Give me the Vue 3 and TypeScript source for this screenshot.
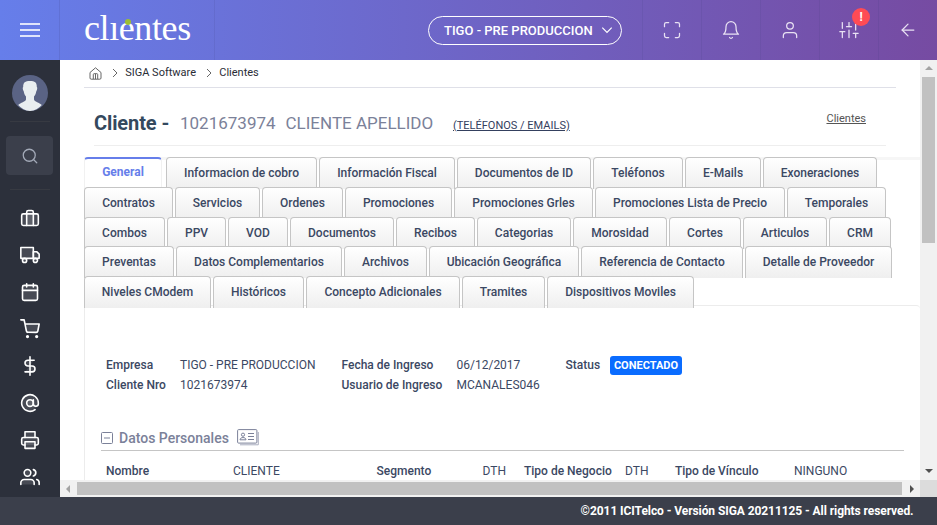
<script setup lang="ts">
interface Tab {
  label: string
  width: number
}

const headerIcons: { name: string; paths: string[]; alert?: boolean }[] = [
  { name: 'fullscreen', paths: ['M8 3H5a2 2 0 0 0-2 2v3', 'M21 8V5a2 2 0 0 0-2-2h-3', 'M16 21h3a2 2 0 0 0 2-2v-3', 'M3 16v3a2 2 0 0 0 2 2h3'] },
  { name: 'bell', paths: ['M18 8A6 6 0 0 0 6 8c0 7-3 9-3 9h18s-3-2-3-9', 'M13.73 21a2 2 0 0 1-3.46 0'] },
  { name: 'user', paths: ['M20 21v-2a4 4 0 0 0-4-4H8a4 4 0 0 0-4 4v2', 'M16 7a4 4 0 1 1-8 0a4 4 0 0 1 8 0z'] },
  { name: 'sliders', alert: true, paths: ['M4 21v-7', 'M4 10V3', 'M12 21v-9', 'M12 8V3', 'M20 21v-5', 'M20 12V3', 'M1 14h6', 'M9 8h6', 'M17 16h6'] },
  { name: 'back', paths: ['M19 12H5', 'M12 19l-7-7l7-7'] },
]

const sideIcons: { name: string; paths: string[] }[] = [
  { name: 'briefcase', paths: ['M4 7h16a2 2 0 0 1 2 2v10a2 2 0 0 1-2 2H4a2 2 0 0 1-2-2V9a2 2 0 0 1 2-2z', 'M16 21V5a2 2 0 0 0-2-2h-4a2 2 0 0 0-2 2v16'] },
  { name: 'truck', paths: ['M1 3h15v13H1z', 'M16 8h4l3 3v5h-7z', 'M8 18.5a2.5 2.5 0 1 1-5 0a2.5 2.5 0 0 1 5 0z', 'M21 18.5a2.5 2.5 0 1 1-5 0a2.5 2.5 0 0 1 5 0z'] },
  { name: 'calendar', paths: ['M5 4h14a2 2 0 0 1 2 2v14a2 2 0 0 1-2 2H5a2 2 0 0 1-2-2V6a2 2 0 0 1 2-2z', 'M16 2v4', 'M8 2v4', 'M3 10h18'] },
  { name: 'cart', paths: ['M10 21a1 1 0 1 1-2 0a1 1 0 0 1 2 0z', 'M21 21a1 1 0 1 1-2 0a1 1 0 0 1 2 0z', 'M1 1h4l2.68 13.39a2 2 0 0 0 2 1.61h9.72a2 2 0 0 0 2-1.61L23 6H6'] },
  { name: 'dollar', paths: ['M12 1v22', 'M17 5H9.5a3.5 3.5 0 0 0 0 7h5a3.5 3.5 0 0 1 0 7H6'] },
  { name: 'at', paths: ['M16 12a4 4 0 1 1-8 0a4 4 0 0 1 8 0z', 'M16 8v5a3 3 0 0 0 6 0v-1a10 10 0 1 0-3.92 7.94'] },
  { name: 'printer', paths: ['M6 9V2h12v7', 'M6 18H4a2 2 0 0 1-2-2v-5a2 2 0 0 1 2-2h16a2 2 0 0 1 2 2v5a2 2 0 0 1-2 2h-2', 'M6 14h12v8H6z'] },
  { name: 'users', paths: ['M17 21v-2a4 4 0 0 0-4-4H5a4 4 0 0 0-4 4v2', 'M13 7a4 4 0 1 1-8 0a4 4 0 0 1 8 0z', 'M23 21v-2a4 4 0 0 0-3-3.87', 'M16 3.13a4 4 0 0 1 0 7.75'] },
]

const tabRows: Tab[][] = [
  [
    { label: 'General', width: 78 },
    { label: 'Informacion de cobro', width: 151 },
    { label: 'Información Fiscal', width: 136 },
    { label: 'Documentos de ID', width: 134 },
    { label: 'Teléfonos', width: 90 },
    { label: 'E-Mails', width: 76 },
    { label: 'Exoneraciones', width: 114 },
  ],
  [
    { label: 'Contratos', width: 89 },
    { label: 'Servicios', width: 85 },
    { label: 'Ordenes', width: 81 },
    { label: 'Promociones', width: 107 },
    { label: 'Promociones Grles', width: 139 },
    { label: 'Promociones Lista de Precio', width: 190 },
    { label: 'Temporales', width: 99 },
  ],
  [
    { label: 'Combos', width: 81 },
    { label: 'PPV', width: 59 },
    { label: 'VOD', width: 60 },
    { label: 'Documentos', width: 104 },
    { label: 'Recibos', width: 79 },
    { label: 'Categorias', width: 94 },
    { label: 'Morosidad', width: 94 },
    { label: 'Cortes', width: 72 },
    { label: 'Articulos', width: 84 },
    { label: 'CRM', width: 62 },
  ],
  [
    { label: 'Preventas', width: 90 },
    { label: 'Datos Complementarios', width: 166 },
    { label: 'Archivos', width: 83 },
    { label: 'Ubicación Geográfica', width: 150 },
    { label: 'Referencia de Contacto', width: 162 },
    { label: 'Detalle de Proveedor', width: 147 },
  ],
  [
    { label: 'Niveles CModem', width: 127 },
    { label: 'Históricos', width: 91 },
    { label: 'Concepto Adicionales', width: 154 },
    { label: 'Tramites', width: 83 },
    { label: 'Dispositivos Moviles', width: 147 },
  ],
]
</script>

<template>
  <div class="app">
    <header class="topbar">
      <button class="menu" aria-label="Menu"><i></i><i></i><i></i></button>
      <div class="brand"><span class="logo">clıentes<b class="dot"></b></span></div>
      <div class="company">
        <button class="pill">
          <span>TIGO - PRE PRODUCCION</span>
          <svg width="12" height="12" viewBox="0 0 12 12"><path d="M1.3 3.6L6 8.4l4.7-4.8" /></svg>
        </button>
      </div>
      <div v-for="icon in headerIcons" :key="icon.name" class="tool">
        <svg class="line-icon" viewBox="0 0 24 24"><path v-for="d in icon.paths" :key="d" :d="d" /></svg>
        <span v-if="icon.alert" class="alert">!</span>
      </div>
    </header>

    <div class="middle">
      <aside class="sidebar">
        <svg class="avatar" viewBox="0 0 36 36">
          <circle cx="18" cy="18" r="18" fill="#5a6384" />
          <path fill="#e9eef0" d="M18 6c4.700 0 7 1.500 6.800 6 .7.300.6 3-.5 4.200-.5 3-1.500 4.300-2.300 5.300v3c.3 2 5.500 3.300 7.800 5.400A18 18 0 0 1 18 36 18 18 0 0 1 6.200 29.900c2.300-2.100 7.500-3.400 7.800-5.400v-3c-.8-1-1.800-2.300-2.300-5.300-1.100-1.200-1.200-3.900-.5-4.200C11 7.500 13.300 6 18 6z" />
        </svg>
        <hr />
        <div class="search">
          <svg viewBox="0 0 24 24"><circle cx="11" cy="11" r="8" /><path d="M21 21l-4.350-4.350" /></svg>
        </div>
        <hr />
        <nav>
          <svg v-for="icon in sideIcons" :key="icon.name" viewBox="0 0 24 24">
            <path v-for="d in icon.paths" :key="d" :d="d" />
          </svg>
        </nav>
      </aside>

      <main class="content">
        <div class="viewport">
          <div class="crumbs">
            <svg class="home" width="13" height="13" viewBox="0 0 13 13"><path d="M1 5.500L6.500.8 12 5.500v5.500a1.200 1.200 0 0 1-1.200 1.200H2.200A1.200 1.200 0 0 1 1 11zM4.300 12V7.500a.8.800 0 0 1 .8-.8h2.800a.8.800 0 0 1 .8.800V12M6.500 7v5" /></svg>
            <svg class="sep" width="6" height="10" viewBox="0 0 6 10"><path d="M1 1l4 4-4 4" /></svg>
            <span>SIGA Software</span>
            <svg class="sep" width="6" height="10" viewBox="0 0 6 10"><path d="M1 1l4 4-4 4" /></svg>
            <span>Clientes</span>
          </div>

          <div class="title">
            <h1>Cliente -</h1>
            <span class="id">1021673974</span>
            <span class="name">CLIENTE APELLIDO</span>
            <a class="contact">(TELÉFONOS / EMAILS)</a>
            <a class="back">Clientes</a>
          </div>

          <div class="tabs">
            <div v-for="(row, r) in tabRows" :key="r" class="tab-row">
              <a
                v-for="tab in row"
                :key="tab.label"
                class="tab"
                :class="{ active: tab.label === 'General' }"
                :style="{ width: tab.width + 'px' }"
              >{{ tab.label }}</a>
            </div>
          </div>

          <section class="panel">
            <div class="summary">
              <b>Empresa</b><span>TIGO - PRE PRODUCCION</span>
              <b>Fecha de Ingreso</b><span>06/12/2017</span>
              <b>Status</b><em class="badge">CONECTADO</em>
              <b>Cliente Nro</b><span>1021673974</span>
              <b>Usuario de Ingreso</b><span>MCANALES046</span>
            </div>

            <h2>
              <svg width="12" height="12" viewBox="0 0 12 12"><rect x=".5" y=".5" width="11" height="11" rx="1" /><path d="M3 6h6" /></svg>
              <span>Datos Personales</span>
              <svg class="card" width="22" height="17" viewBox="0 0 22 17">
                <path class="shade" d="M3 15.800h18.300V3" />
                <rect x=".6" y=".6" width="19.300" height="13.500" rx="1" />
                <circle cx="6" cy="5.700" r="1.600" />
                <path d="M3 10.800c0-3 6-3 6 0zM11 4.500h6M11 7.500h6M11 10.500h6" />
              </svg>
            </h2>

            <div class="personal">
              <b>Nombre</b><span>CLIENTE</span>
              <b>Segmento</b><span>DTH</span>
              <b>Tipo de Negocio</b><span>DTH</span>
              <b>Tipo de Vínculo</b><span>NINGUNO</span>
            </div>
          </section>
        </div>
        <div class="vbar"><i class="up"></i><i class="vthumb"></i><i class="down"></i></div>
        <div class="hbar"><i class="left"></i><i class="hthumb"></i><i class="right"></i></div>
        <div class="corner"></div>
      </main>
    </div>

    <footer class="footer">©2011 ICITelco - Versión SIGA 20211125 - All rights reserved.</footer>
  </div>
</template>

<style>
body {
  margin: 0;
  overflow: hidden;
}
</style>

<style scoped>
* {
  box-sizing: border-box;
}
.app {
  width: 937px;
  height: 525px;
  display: flex;
  flex-direction: column;
  font-family: Roboto, sans-serif;
  font-size: 12px;
  color: #3b4863;
  overflow: hidden;
  white-space: nowrap;
}
button {
  font: inherit;
  color: inherit;
  background: none;
  border: 0;
  padding: 0;
}
svg {
  flex: none;
}
.topbar {
  height: 60px;
  flex: none;
  display: flex;
  color: #fff;
  background: linear-gradient(90deg, #667eea 0%, #764ba2 100%);
}
.menu {
  flex: none;
  width: 60px;
  border-right: 1px solid rgba(60, 60, 120, 0.15);
  display: flex;
  flex-direction: column;
  align-items: center;
  justify-content: center;
  gap: 4px;
}
.menu i {
  width: 20px;
  height: 2px;
  background: #dfe4fb;
}
.brand {
  flex: none;
  width: 155px;
  border-right: 1px solid rgba(60, 60, 120, 0.12);
  padding: 8px 0 0 24px;
}
.logo {
  position: relative;
  display: block;
  font-family: 'Liberation Serif', serif;
  font-size: 36px;
  line-height: 40px;
  letter-spacing: -0.4px;
}
.dot {
  position: absolute;
  left: 41px;
  top: 11px;
  width: 6px;
  height: 6px;
  border-radius: 50%;
  background: #9dbe32;
}
.company {
  flex: 1;
  display: flex;
  justify-content: flex-end;
  align-items: center;
  padding-right: 20px;
}
.pill {
  flex: none;
  width: 194px;
  height: 29px;
  border: 1px solid #fff;
  border-radius: 15px;
  display: flex;
  align-items: center;
  justify-content: space-between;
  padding: 0 8px 0 15px;
  font-size: 13px;
  font-weight: 500;
}
.pill path {
  fill: none;
  stroke: #fff;
  stroke-width: 1.2;
}
.tool {
  flex: none;
  width: 59px;
  border-left: 1px solid rgba(60, 60, 120, 0.13);
  display: flex;
  align-items: center;
  justify-content: center;
  position: relative;
}
.line-icon {
  width: 20px;
  height: 20px;
  fill: none;
  stroke: #e9e2f3;
  stroke-width: 1.5;
  stroke-linecap: round;
  stroke-linejoin: round;
}
.alert {
  position: absolute;
  left: 32px;
  top: 8px;
  width: 18px;
  height: 18px;
  border-radius: 50%;
  background: #ff4b55;
  font-size: 12px;
  font-weight: 700;
  line-height: 18px;
  text-align: center;
}
.middle {
  height: 437px;
  display: flex;
}
.sidebar {
  width: 60px;
  background: #2c303b;
  padding-top: 15px;
  display: flex;
  flex-direction: column;
  align-items: center;
}
.avatar {
  width: 36px;
  height: 36px;
}
.sidebar hr {
  width: 40px;
  height: 1px;
  margin: 10px 0 14px;
  border: 0;
  background: #373a42;
}
.search {
  width: 47px;
  height: 39px;
  margin-right: 1px;
  border-radius: 4px;
  background: #3b3f4b;
  display: flex;
  align-items: center;
  justify-content: center;
}
.sidebar .search + hr {
  margin: 14px 0 18px;
}
.search svg {
  width: 18px;
  height: 18px;
  fill: none;
  stroke: #a3aab8;
  stroke-width: 1.7;
  stroke-linecap: round;
}
nav {
  display: flex;
  flex-direction: column;
  gap: 17px;
}
nav svg {
  width: 20px;
  height: 20px;
  fill: rgba(255, 255, 255, 0.13);
  stroke: #fff;
  stroke-width: 1.9;
  stroke-linecap: round;
  stroke-linejoin: round;
}
.content {
  flex: 1;
  display: grid;
  grid-template: 420px 17px / 860px 17px;
}
.viewport {
  background: #fff;
  overflow: hidden;
}
.crumbs {
  height: 28px;
  width: 812px;
  margin-left: 24px;
  padding: 0 0 3px 5px;
  border-bottom: 1px solid #dfe0e8;
  display: flex;
  align-items: center;
  font-size: 11px;
  color: #2a2d36;
}
.crumbs svg {
  fill: none;
  stroke: #666;
  position: relative;
  top: 1px;
}
.sep {
  margin: 0 7.400px 0 9.800px;
}
.title {
  height: 58px;
  width: 792px;
  margin-left: 34px;
  border-bottom: 1px solid #eee;
  display: flex;
  align-items: baseline;
  padding-top: 23px;
  color: #7b8199;
}
h1 {
  margin: 0 10px 0 0;
  width: 76px;
  font-size: 20px;
  font-weight: 700;
  letter-spacing: -0.1px;
  color: #34495e;
}
.id,
.name {
  font-size: 17px;
  position: relative;
  top: -1px;
}
.id {
  width: 105.500px;
}
.name {
  width: 167.500px;
}
.contact {
  font-size: 11px;
  color: #34405e;
  text-decoration: underline;
  position: relative;
  top: -1px;
}
.back {
  margin-left: auto;
  margin-right: 20px;
  align-self: flex-start;
  color: #555;
  font-size: 11px;
  line-height: 16px;
  text-decoration: underline;
}
.tabs {
  height: 148px;
  margin: 11px 0 0 24px;
  border-top: 3px solid #f6f6f6;
}
.tab-row {
  height: 30px;
  display: flex;
  gap: 2px;
  position: relative;
  top: -3px;
}
.tab-row:nth-child(3) {
  height: 29px;
}
.tab {
  height: 32px;
  flex: none;
  border: 1px solid #c5c5c5;
  border-bottom: 0;
  border-radius: 4px 4px 0 0;
  background: linear-gradient(#fff, #efefef);
  text-align: center;
  font-weight: 500;
  line-height: 31px;
}
.tab.active {
  margin-right: 2px;
  border: 1px solid #f1f1f1;
  border-top: 2px solid #667eea;
  border-bottom: 0;
  background: #fff;
  color: #667eea;
  font-weight: 700;
  line-height: 27px;
}
.panel {
  height: 175px;
  margin-left: 24px;
  border: 1px solid #ececec;
  border-right: 0;
  border-bottom: 0;
  border-radius: 4px 4px 0 0;
  padding: 49px 16px 0 16px;
}
.summary {
  display: grid;
  grid-template-columns: 74px 161.500px 115px 109px 44.500px 1fr;
  grid-auto-rows: 20px;
  align-items: center;
  padding-left: 5px;
}
b {
  font-weight: 500;
}
.badge {
  width: 72px;
  height: 19px;
  border-radius: 3px;
  background: #0a6cff;
  color: #fff;
  font-style: normal;
  font-weight: 700;
  font-size: 11px;
  line-height: 19px;
  text-align: center;
}
h2 {
  height: 26px;
  margin: 30px 0 0;
  border-bottom: 1px solid #c5c5c5;
  display: flex;
  align-items: center;
  font-size: 14px;
  font-weight: 500;
  color: #7b8199;
}
h2 svg {
  fill: none;
  stroke: #7b8199;
}
h2 span {
  margin: 0 8px 0 6px;
}
.shade {
  stroke: #a9adbf;
}
.personal {
  height: 40px;
  padding-left: 5px;
  display: grid;
  grid-template-columns: 127px 143.500px 106px 41.500px 101px 50px 119px 1fr;
  align-items: center;
}
.vbar,
.hbar {
  background: #f1f1f1;
  display: flex;
  align-items: center;
}
.vbar {
  flex-direction: column;
}
.vthumb {
  width: 13px;
  height: 166px;
  margin-top: 7px;
  background: #c1c1c1;
}
.hthumb {
  width: 825px;
  height: 13px;
  margin-left: 7px;
  background: #c1c1c1;
}
.up,
.down,
.left,
.right {
  width: 0;
  height: 0;
  border: 4px solid transparent;
}
.up {
  margin-top: 6px;
  border-width: 0 4px 4px;
  border-bottom-color: #a3a3a3;
}
.down {
  margin: auto 0 7px;
  border-width: 4px 4px 0;
  border-top-color: #505050;
}
.left {
  margin-left: 6px;
  border-width: 4px 4px 4px 0;
  border-right-color: #a3a3a3;
}
.right {
  margin-left: 8px;
  border-width: 4px 0 4px 4px;
  border-left-color: #505050;
}
.corner {
  background: #dcdcdc;
}
.footer {
  height: 28px;
  background: #3b3f4b;
  color: #fff;
  font-weight: 700;
  letter-spacing: -0.075px;
  line-height: 28px;
  text-align: right;
  padding-right: 23.500px;
}
</style>
